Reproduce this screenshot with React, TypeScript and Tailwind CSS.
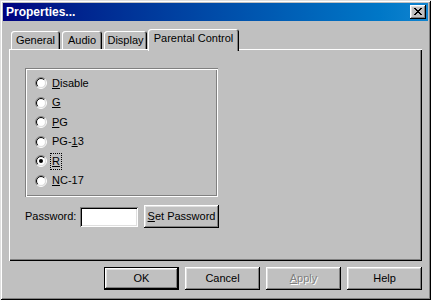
import clsx from 'clsx';

const font = "font-['Liberation_Sans',Arial,sans-serif]";

// Win98 bevels
const raised =
  'shadow-[inset_-1px_-1px_#000,inset_1px_1px_#fff,inset_-2px_-2px_#808080,inset_2px_2px_#dfdfdf]';
const sunken =
  'shadow-[inset_1px_1px_#808080,inset_-1px_-1px_#fff,inset_2px_2px_#000,inset_-2px_-2px_#dfdfdf]';

function Radio({ checked }: { checked?: boolean }) {
  const r1 = 5.5;
  const r2 = 4.5;
  const d1 = r1 * 0.7071;
  const d2 = r2 * 0.7071;
  return (
    <svg width="12" height="12" viewBox="0 0 12 12" className="shrink-0">
      <circle cx="6" cy="6" r="4.5" fill="#fff" />
      <path d={`M${6 - d1} ${6 + d1} A${r1} ${r1} 0 0 1 ${6 + d1} ${6 - d1}`} fill="none" stroke="#808080" />
      <path d={`M${6 + d1} ${6 - d1} A${r1} ${r1} 0 0 1 ${6 - d1} ${6 + d1}`} fill="none" stroke="#fff" />
      <path d={`M${6 - d2} ${6 + d2} A${r2} ${r2} 0 0 1 ${6 + d2} ${6 - d2}`} fill="none" stroke="#000" />
      <path d={`M${6 + d2} ${6 - d2} A${r2} ${r2} 0 0 1 ${6 - d2} ${6 + d2}`} fill="none" stroke="#dfdfdf" />
      {checked && <circle cx="6" cy="6" r="2" fill="#000" />}
    </svg>
  );
}

type Opcao = { pre: string; key: string; post: string; h: string; checked?: boolean };

const opcoes: Opcao[] = [
  { pre: '', key: 'D', post: 'isable', h: 'h-[20px]' },
  { pre: '', key: 'G', post: '', h: 'h-[19px]' },
  { pre: '', key: 'P', post: 'G', h: 'h-[20px]' },
  { pre: 'PG-', key: '1', post: '3', h: 'h-[19px]' },
  { pre: '', key: 'R', post: '', h: 'h-[20px]', checked: true },
  { pre: '', key: 'N', post: 'C-17', h: 'h-[19px]' },
];

function Tab({ label, className, active }: { label: string; className: string; active?: boolean }) {
  return (
    <div
      className={clsx(
        'relative flex justify-center rounded-t-[3px] bg-[#c0c0c0] shadow-[inset_1px_1px_#fff,inset_-1px_0_#000,inset_-2px_0_#808080]',
        active ? 'z-10 -mb-[2px] h-[22px] pt-[3px]' : 'h-[18px] pt-[3px]',
        className,
      )}
    >
      <span className="leading-[13px]">{label}</span>
    </div>
  );
}

function Botao({
  children,
  padrao,
  disabled,
  className,
}: {
  children: React.ReactNode;
  padrao?: boolean;
  disabled?: boolean;
  className?: string;
}) {
  return (
    <button
      type="button"
      className={clsx(
        'flex h-[23px] w-[75px] items-center justify-center bg-[#c0c0c0]',
        padrao
          ? 'shadow-[inset_0_0_0_1px_#000,inset_-2px_-2px_#000,inset_2px_2px_#fff,inset_-3px_-3px_#808080,inset_3px_3px_#dfdfdf]'
          : raised,
        disabled && 'text-[#808080] [text-shadow:1px_1px_#fff]',
        className,
      )}
    >
      {children}
    </button>
  );
}

export default function App() {
  return (
    <div
      className={clsx(
        'flex h-[300px] w-[431px] flex-col bg-[#c0c0c0] p-[3px] text-[11px] text-black',
        font,
        'shadow-[inset_1px_1px_#dfdfdf,inset_-1px_-1px_#000,inset_2px_2px_#fff,inset_-2px_-2px_#808080]',
      )}
    >
      {/* barra de título */}
      <div className="flex h-[18px] shrink-0 items-center justify-between bg-gradient-to-r from-[#000080] to-[#1084d0] pl-[3px] pr-[2px]">
        <span className="text-[12px] font-bold text-white">Properties...</span>
        <div className={clsx('flex h-[14px] w-[16px] items-center justify-center bg-[#c0c0c0]', raised)}>
          <svg width="8" height="7" viewBox="0 0 8 7" shapeRendering="crispEdges" className="-mt-px">
            <path d="M0 0h2v1h-2zM6 0h2v1h-2zM1 1h2v1h-2zM5 1h2v1h-2zM2 2h4v1h-4zM3 3h2v1h-2zM2 4h4v1h-4zM1 5h2v1h-2zM5 5h2v1h-2zM0 6h2v1h-2zM6 6h2v1h-2z" fill="#000" />
          </svg>
        </div>
      </div>

      <div className="flex flex-1 flex-col px-[6px] pt-[8px]">
        {/* abas */}
        <div className="flex h-[20px] items-end">
          <Tab label="General" className="ml-[2px] w-[49px]" />
          <Tab label="Audio" className="ml-[2px] w-[40px]" />
          <Tab label="Display" className="ml-[2px] w-[43px]" />
          <Tab label="Parental Control" className="ml-[1px] w-[91px]" active />
        </div>

        {/* painel */}
        <div
          className={clsx(
            'h-[212px] bg-[#c0c0c0] pl-[16px] pt-[19px]',
            'shadow-[inset_1px_1px_#fff,inset_-1px_-1px_#000,inset_-2px_-2px_#808080]',
          )}
        >
          <div className="h-[129px] w-[193px] pl-[10px] pt-[5px] shadow-[inset_1px_1px_#808080,inset_-1px_-1px_#fff,inset_2px_2px_#fff,inset_-2px_-2px_#808080]">
            {opcoes.map((o) => (
              <div key={o.pre + o.key + o.post} className={clsx('flex items-center gap-[5px]', o.h)}>
                <Radio checked={o.checked} />
                <span
                  className={clsx(
                    'leading-[13px]',
                    o.checked && '-ml-[2px] border border-dotted border-black px-[1px] py-[1px]',
                  )}
                >
                  {o.pre}
                  <span className="underline underline-offset-[1px]">{o.key}</span>
                  {o.post}
                </span>
              </div>
            ))}
          </div>

          <div className="mt-[8px] flex h-[23px] items-center">
            <span className="w-[55px]">Password:</span>
            <div className={clsx('h-[20px] w-[58px] bg-white', sunken)} />
            <Botao className="ml-[6px]">
              <span>
                <span className="underline underline-offset-[1px]">S</span>et Password
              </span>
            </Botao>
          </div>
        </div>

        {/* botões */}
        <div className="mt-[6px] flex justify-end gap-[6px]">
          <Botao padrao>OK</Botao>
          <Botao>Cancel</Botao>
          <Botao disabled>
            <span>
              <span className="underline underline-offset-[1px]">A</span>pply
            </span>
          </Botao>
          <Botao>Help</Botao>
        </div>
      </div>
    </div>
  );
}
